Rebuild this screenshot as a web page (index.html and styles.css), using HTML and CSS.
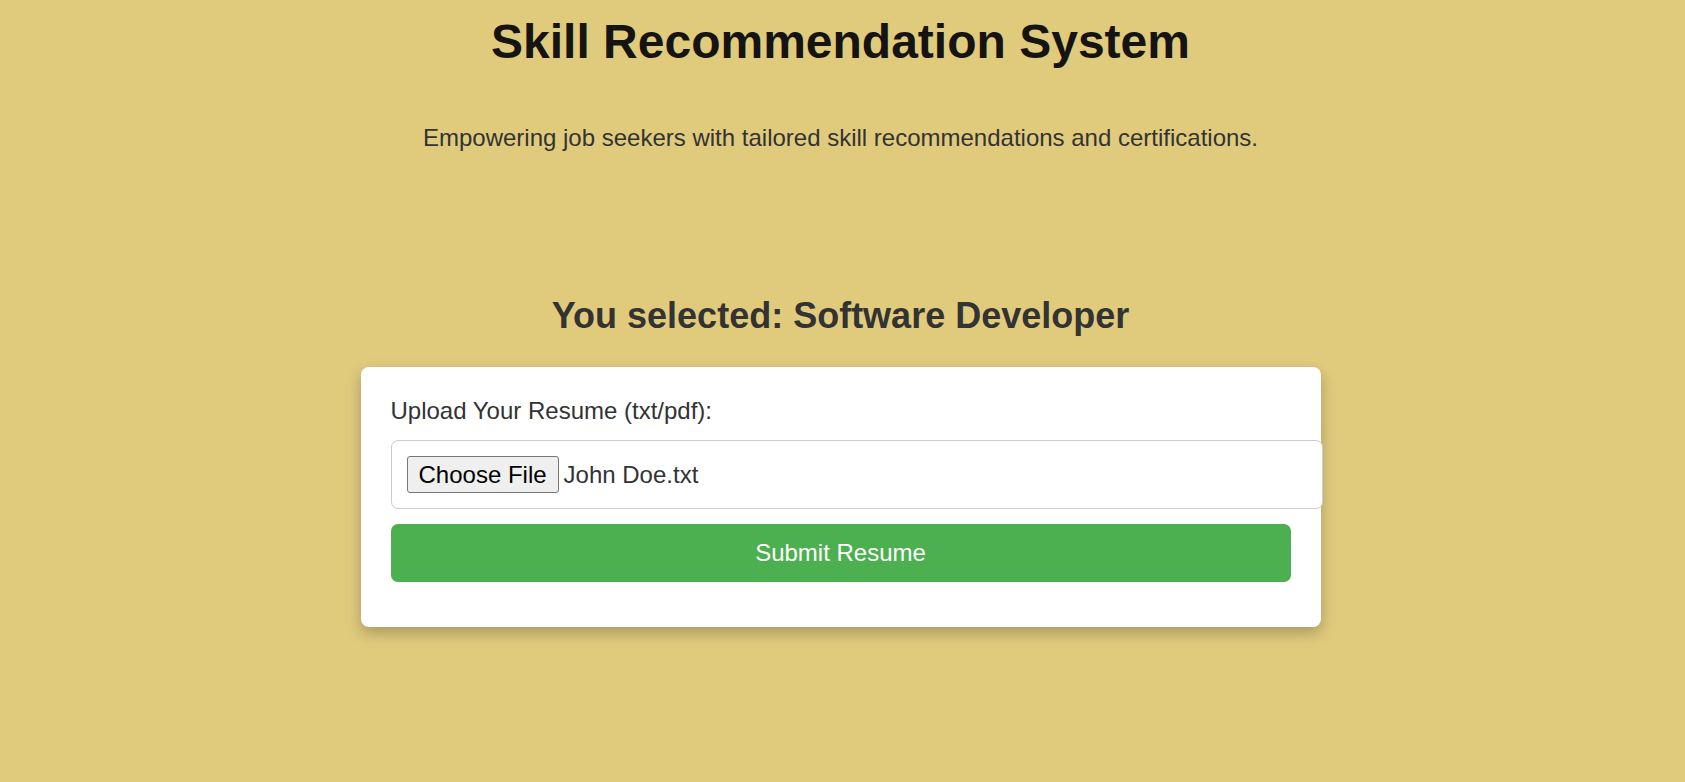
FILE: index.html
```html
<!DOCTYPE html>
<html lang="en">
<head>
<meta charset="utf-8">
<title>Skill Recommendation System</title>
<link rel="stylesheet" href="styles.css">
</head>
<body>
<header class="header">
  <h1 class="title">Skill Recommendation System</h1>
  <p class="subtitle">Empowering job seekers with tailored skill recommendations and certifications.</p>
</header>
<main class="main">
  <h2 class="selected">You selected: Software Developer</h2>
  <div class="card">
    <form class="form">
      <label class="label">Upload Your Resume (txt/pdf):</label>
      <div class="file-input">
        <span class="file-btn">Choose File</span>
        <span class="file-name">John Doe.txt</span>
      </div>
      <button type="button" class="submit">Submit Resume</button>
    </form>
  </div>
</main>
</body>
</html>
```

FILE: styles.css
```css
html, body {
  margin: 0;
  padding: 0;
}
body {
  background: #e0cb7d;
  font-family: "Liberation Sans", Arial, sans-serif;
  font-size: 24px;
  color: #333;
  padding-right: 4px;
}
.header {
  padding-top: 14px;
  text-align: center;
}
.title {
  margin: 0;
  font-size: 48px;
  font-weight: bold;
  color: #161412;
}
.subtitle {
  margin: 55px 0 0;
  font-size: 24px;
  color: #333;
}
.main {
  padding-top: 143px;
  padding-bottom: 80px;
}
.selected {
  margin: 0 0 30px;
  text-align: center;
  font-size: 36px;
  font-weight: bold;
  color: #333;
}
.card {
  box-sizing: border-box;
  width: 960px;
  margin: 0 auto;
  padding: 30px;
  background: #fff;
  border-radius: 8px;
  box-shadow: 0 6px 15px rgba(0, 0, 0, 0.25);
}
.form {
  margin: 0;
}
.label {
  display: block;
  margin-bottom: 15px;
  color: #333;
}
.file-input {
  width: 100%;
  padding: 15px;
  border: 1px solid #ccc;
  border-radius: 7px;
  background: #fff;
  display: flex;
  align-items: center;
}
.file-btn {
  box-sizing: border-box;
  height: 37px;
  display: flex;
  align-items: center;
  padding: 0 11px;
  background: #efefef;
  border: 1px solid #767676;
  border-radius: 3px;
  color: #000;
}
.file-name {
  margin-left: 5px;
  color: #333;
}
.submit {
  display: block;
  width: 100%;
  margin: 15px 0;
  padding: 15px;
  border: none;
  border-radius: 7px;
  background: #4caf50;
  color: #fff;
  font-family: "Liberation Sans", Arial, sans-serif;
  font-size: 24px;
  line-height: normal;
}
```
